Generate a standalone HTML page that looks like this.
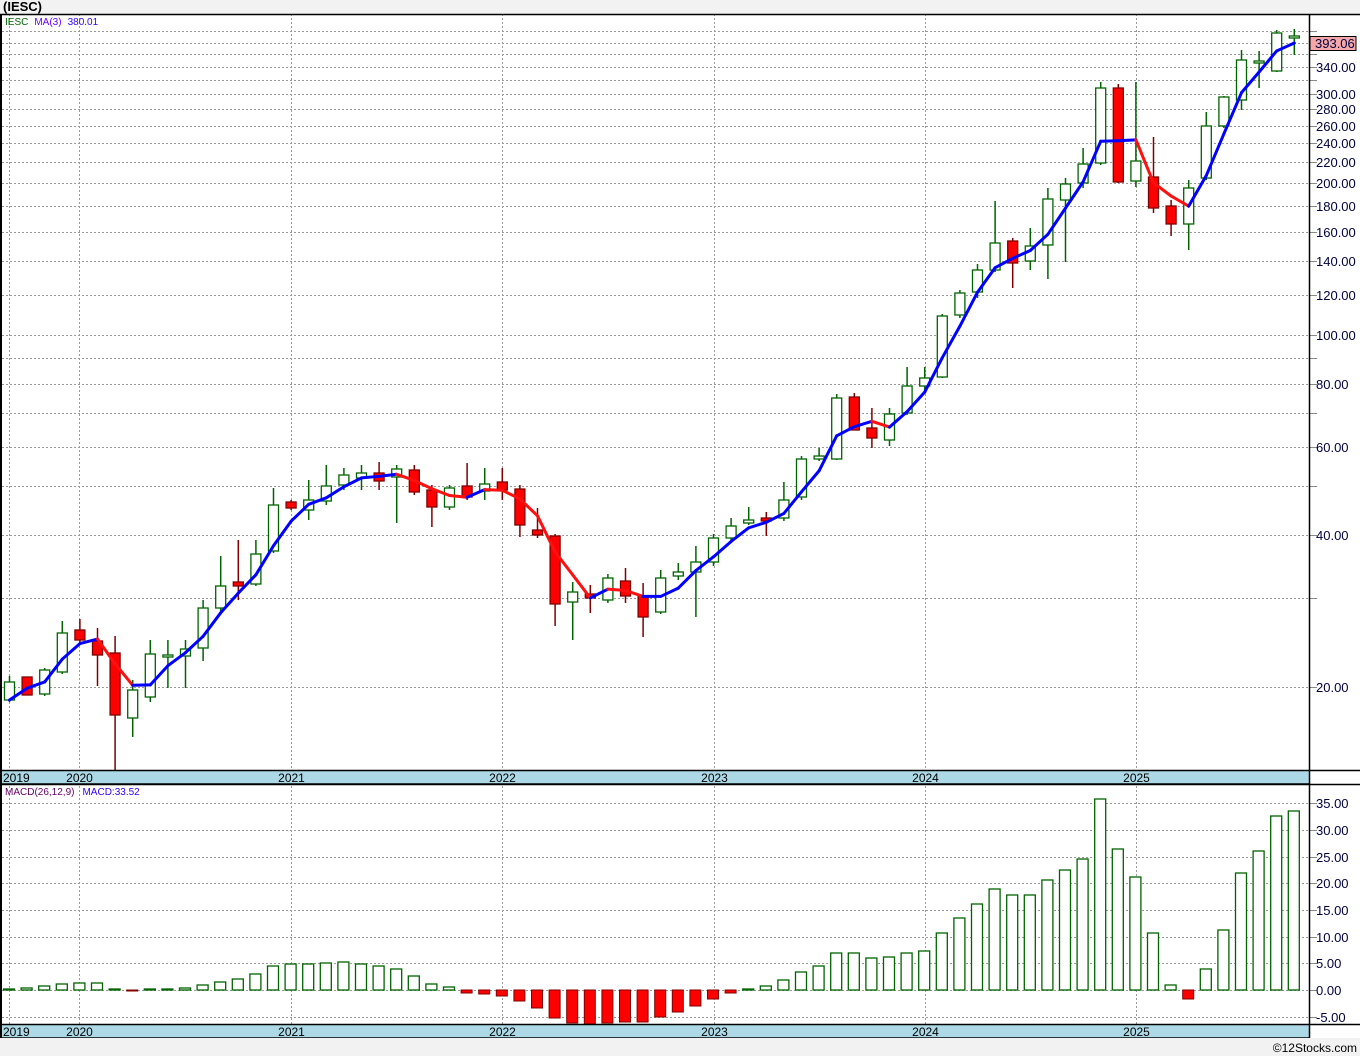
<!DOCTYPE html><html><head><meta charset="utf-8"><style>
html,body{margin:0;padding:0;background:#f2f2f2;width:1360px;height:1056px;overflow:hidden}
svg{display:block;font-family:"Liberation Sans",sans-serif}
</style></head><body>
<svg id="s" width="1360" height="1056" xmlns="http://www.w3.org/2000/svg"></svg>
<script>
var C=[[682,700,676,702,0],[695,677,677,695,1],[694,670,668,696,0],[672,633,621,674,0],[640,630,619,642,1],[641,655,628,686,1],[653,715,636,770,1],[718,690,680,737,0],[697,654,640,702,0],[657,655,640,688,0],[656,649,640,688,0],[648,608,600,661,0],[608,586,556,612,0],[582,586,540,600,1],[584,554,540,586,0],[551,505,488,553,0],[502,508,500,510,1],[510,500,480,520,0],[501,486,465,505,0],[485,475,468,490,0],[478,473,465,490,0],[473,481,462,490,1],[477,469,465,523,0],[470,492,465,495,1],[490,507,485,527,1],[507,488,485,510,0],[486,497,463,500,1],[491,484,468,500,0],[482,490,468,500,1],[489,525,485,537,1],[530,535,508,538,1],[536,604,534,626,1],[602,592,582,640,0],[594,598,585,613,1],[600,578,574,603,0],[581,596,568,603,1],[596,617,583,637,1],[612,578,570,614,0],[576,572,563,580,0],[572,562,546,617,0],[562,538,534,566,0],[538,526,518,543,0],[523,520,507,525,0],[518,521,512,536,1],[518,500,482,521,0],[497,459,456,500,0],[459,456,448,461,0],[459,398,394,460,0],[397,430,393,430,1],[428,438,408,448,1],[440,414,408,446,0],[413,386,367,415,0],[386,378,367,392,0],[377,316,314,378,0],[315,293,290,318,0],[292,270,264,298,0],[270,243,201,272,0],[241,263,238,288,1],[261,246,228,270,0],[245,199,188,279,0],[200,184,178,262,0],[183,164,148,188,0],[163,88,82,165,0],[88,182,84,183,1],[181,161,82,187,0],[177,208,137,213,1],[206,224,200,236,1],[224,188,180,250,0],[178,126,112,180,0],[126,97,96,128,0],[100,60,50,110,0],[63,61,51,88,0],[71,33,30,72,0],[37,36,29,55,0]];
var M=[989,988,986,984,983,983,989,991,989,989,988,985,982,979,974,966,964,964,963,962,964,966,969,976,984,987,993,994,996,1001,1008,1018,1023,1024,1023,1022,1022,1017,1012,1006,999,993,989,986,980,972,966,953,953,958,957,953,951,933,918,904,889,895,895,880,870,859,799,849,877,933,985,999,969,930,873,851,816,811];
var K=151.7,Y0=687;function py(p){return Y0-K*Math.log2(p/20)}function yp(y){return 20*Math.pow(2,(Y0-y)/K)}
function X(i){return 9.5+17.6*i}
var h='';
h+='<text x="3" y="11" font-size="13" font-weight="bold" fill="#000">(IESC)</text>';
h+='<rect x="0" y="14" width="1360" height="1024" fill="#fff"/>';
var gl=[];for(var p=20;p<=100;p+=10)gl.push(p);for(var p=120;p<=400;p+=20)gl.push(p);
var lab=[20,40,60,80,100,120,140,160,180,200,220,240,260,280,300,340];
gl.forEach(function(p){var y=Math.round(py(p))+.5;h+='<line x1="2" x2="1309" y1="'+y+'" y2="'+y+'" stroke="#999" stroke-dasharray="2,2"/><line x1="1310" x2="1317" y1="'+y+'" y2="'+y+'" stroke="#888"/>';
if(lab.indexOf(p)>=0)h+='<text x="1316" y="'+(y+4.5)+'" font-size="13" fill="#000040">'+p.toFixed(2)+'</text>';});
var yrs=[[9,'2019'],[79,'2020'],[291,'2021'],[502,'2022'],[714,'2023'],[925,'2024'],[1136,'2025']];
yrs.forEach(function(a){h+='<line x1="'+(a[0]+.5)+'" x2="'+(a[0]+.5)+'" y1="14" y2="1024" stroke="#999" stroke-dasharray="2,2"/>';});
for(var v=-5;v<=35;v+=5){var y=Math.round(990-v*5.34)+.5;h+='<line x1="2" x2="1309" y1="'+y+'" y2="'+y+'" stroke="#999" stroke-dasharray="2,2"/><line x1="1310" x2="1317" y1="'+y+'" y2="'+y+'" stroke="#888"/><text x="1316" y="'+(y+4.5)+'" font-size="13" fill="#000040">'+(v<0?'-'+(-v).toFixed(2):v.toFixed(2))+'</text>';}
C.forEach(function(c,i){var x=X(i),o=c[0],cl=c[1],t=Math.min(o,cl),b=Math.max(o,cl);if(b-t<2)b=t+2;var red=c[4];var col=red?'#800000':'#006400';
h+='<line x1="'+x+'" x2="'+x+'" y1="'+c[2]+'" y2="'+c[3]+'" stroke="'+col+'" stroke-width="1.5"/>';
h+='<rect x="'+(x-5)+'" y="'+t+'" width="10" height="'+(b-t)+'" fill="'+(red?'#ff0000':'#fff')+'" stroke="'+col+'" stroke-width="1.3"/>';});
var ma=[];C.forEach(function(c,i){var a=[];for(var j=Math.max(0,i-2);j<=i;j++)a.push(yp(C[j][1]));var s=0;a.forEach(function(q){s+=q});ma.push(py(s/a.length));});
for(var i=1;i<ma.length;i++){var col=ma[i]>ma[i-1]+0.3?'#ff1010':'#0000ff';h+='<line x1="'+X(i-1)+'" y1="'+ma[i-1]+'" x2="'+X(i)+'" y2="'+ma[i]+'" stroke="'+col+'" stroke-width="3" stroke-linecap="round"/>';}
M.forEach(function(y,i){var x=X(i)-0.5;if(y>990){h+='<rect x="'+(x-5.5)+'" y="990" width="11" height="'+(y-990)+'" fill="#ff0000" stroke="#800000"/>';}else{h+='<rect x="'+(x-5.5)+'" y="'+y+'" width="11" height="'+Math.max(1,990-y)+'" fill="#fff" stroke="#006400" stroke-width="1.3"/>';}});
h+='<rect x="1310" y="36.5" width="46" height="14" fill="#f4a8a8" stroke="#000"/><text x="1315" y="48" font-size="13" fill="#000040">393.06</text>';
[770,1024].forEach(function(y){h+='<rect x="2" y="'+y+'" width="1307" height="14" fill="#add8e6"/><line x1="0" x2="1360" y1="'+(y+.5)+'" y2="'+(y+.5)+'" stroke="#000" stroke-width="1.5"/><line x1="0" x2="1310" y1="'+(y+14)+'" y2="'+(y+14)+'" stroke="#000" stroke-width="1.5"/>';
yrs.forEach(function(a,k){if(k==0)h+='<text x="3" y="'+(y+12)+'" font-size="12" fill="#000">'+a[1]+'</text>';else h+='<text x="'+(a[0]+0.5)+'" y="'+(y+12)+'" font-size="12" text-anchor="middle" fill="#000">'+a[1]+'</text>';});});
h+='<line x1="0" x2="1360" y1="784.5" y2="784.5" stroke="#000" stroke-width="1.5"/>';
h+='<line x1="0" x2="1360" y1="14.5" y2="14.5" stroke="#000" stroke-width="1.5"/>';
h+='<line x1="1" x2="1" y1="14" y2="1038" stroke="#000" stroke-width="2"/>';
h+='<line x1="1309.5" x2="1309.5" y1="14" y2="1038" stroke="#000" stroke-width="1.5"/>';
h+='<rect x="0" y="1038" width="1360" height="18" fill="#f2f2f2"/>';
h+='<text x="5" y="25" font-size="10"><tspan fill="#006400">IESC</tspan><tspan fill="#6600ff" dx="6">MA(3)</tspan><tspan fill="#3300ff" dx="6">380.01</tspan></text>';
h+='<text x="5" y="795" font-size="10"><tspan fill="#660066">MACD(26,12,9)</tspan><tspan fill="#3300ff" dx="8">MACD:33.52</tspan></text>';
h+='<text x="1357" y="1052" font-size="12" text-anchor="end" fill="#000">©12Stocks.com</text>';
document.getElementById('s').innerHTML=h;
</script>
</body></html>
